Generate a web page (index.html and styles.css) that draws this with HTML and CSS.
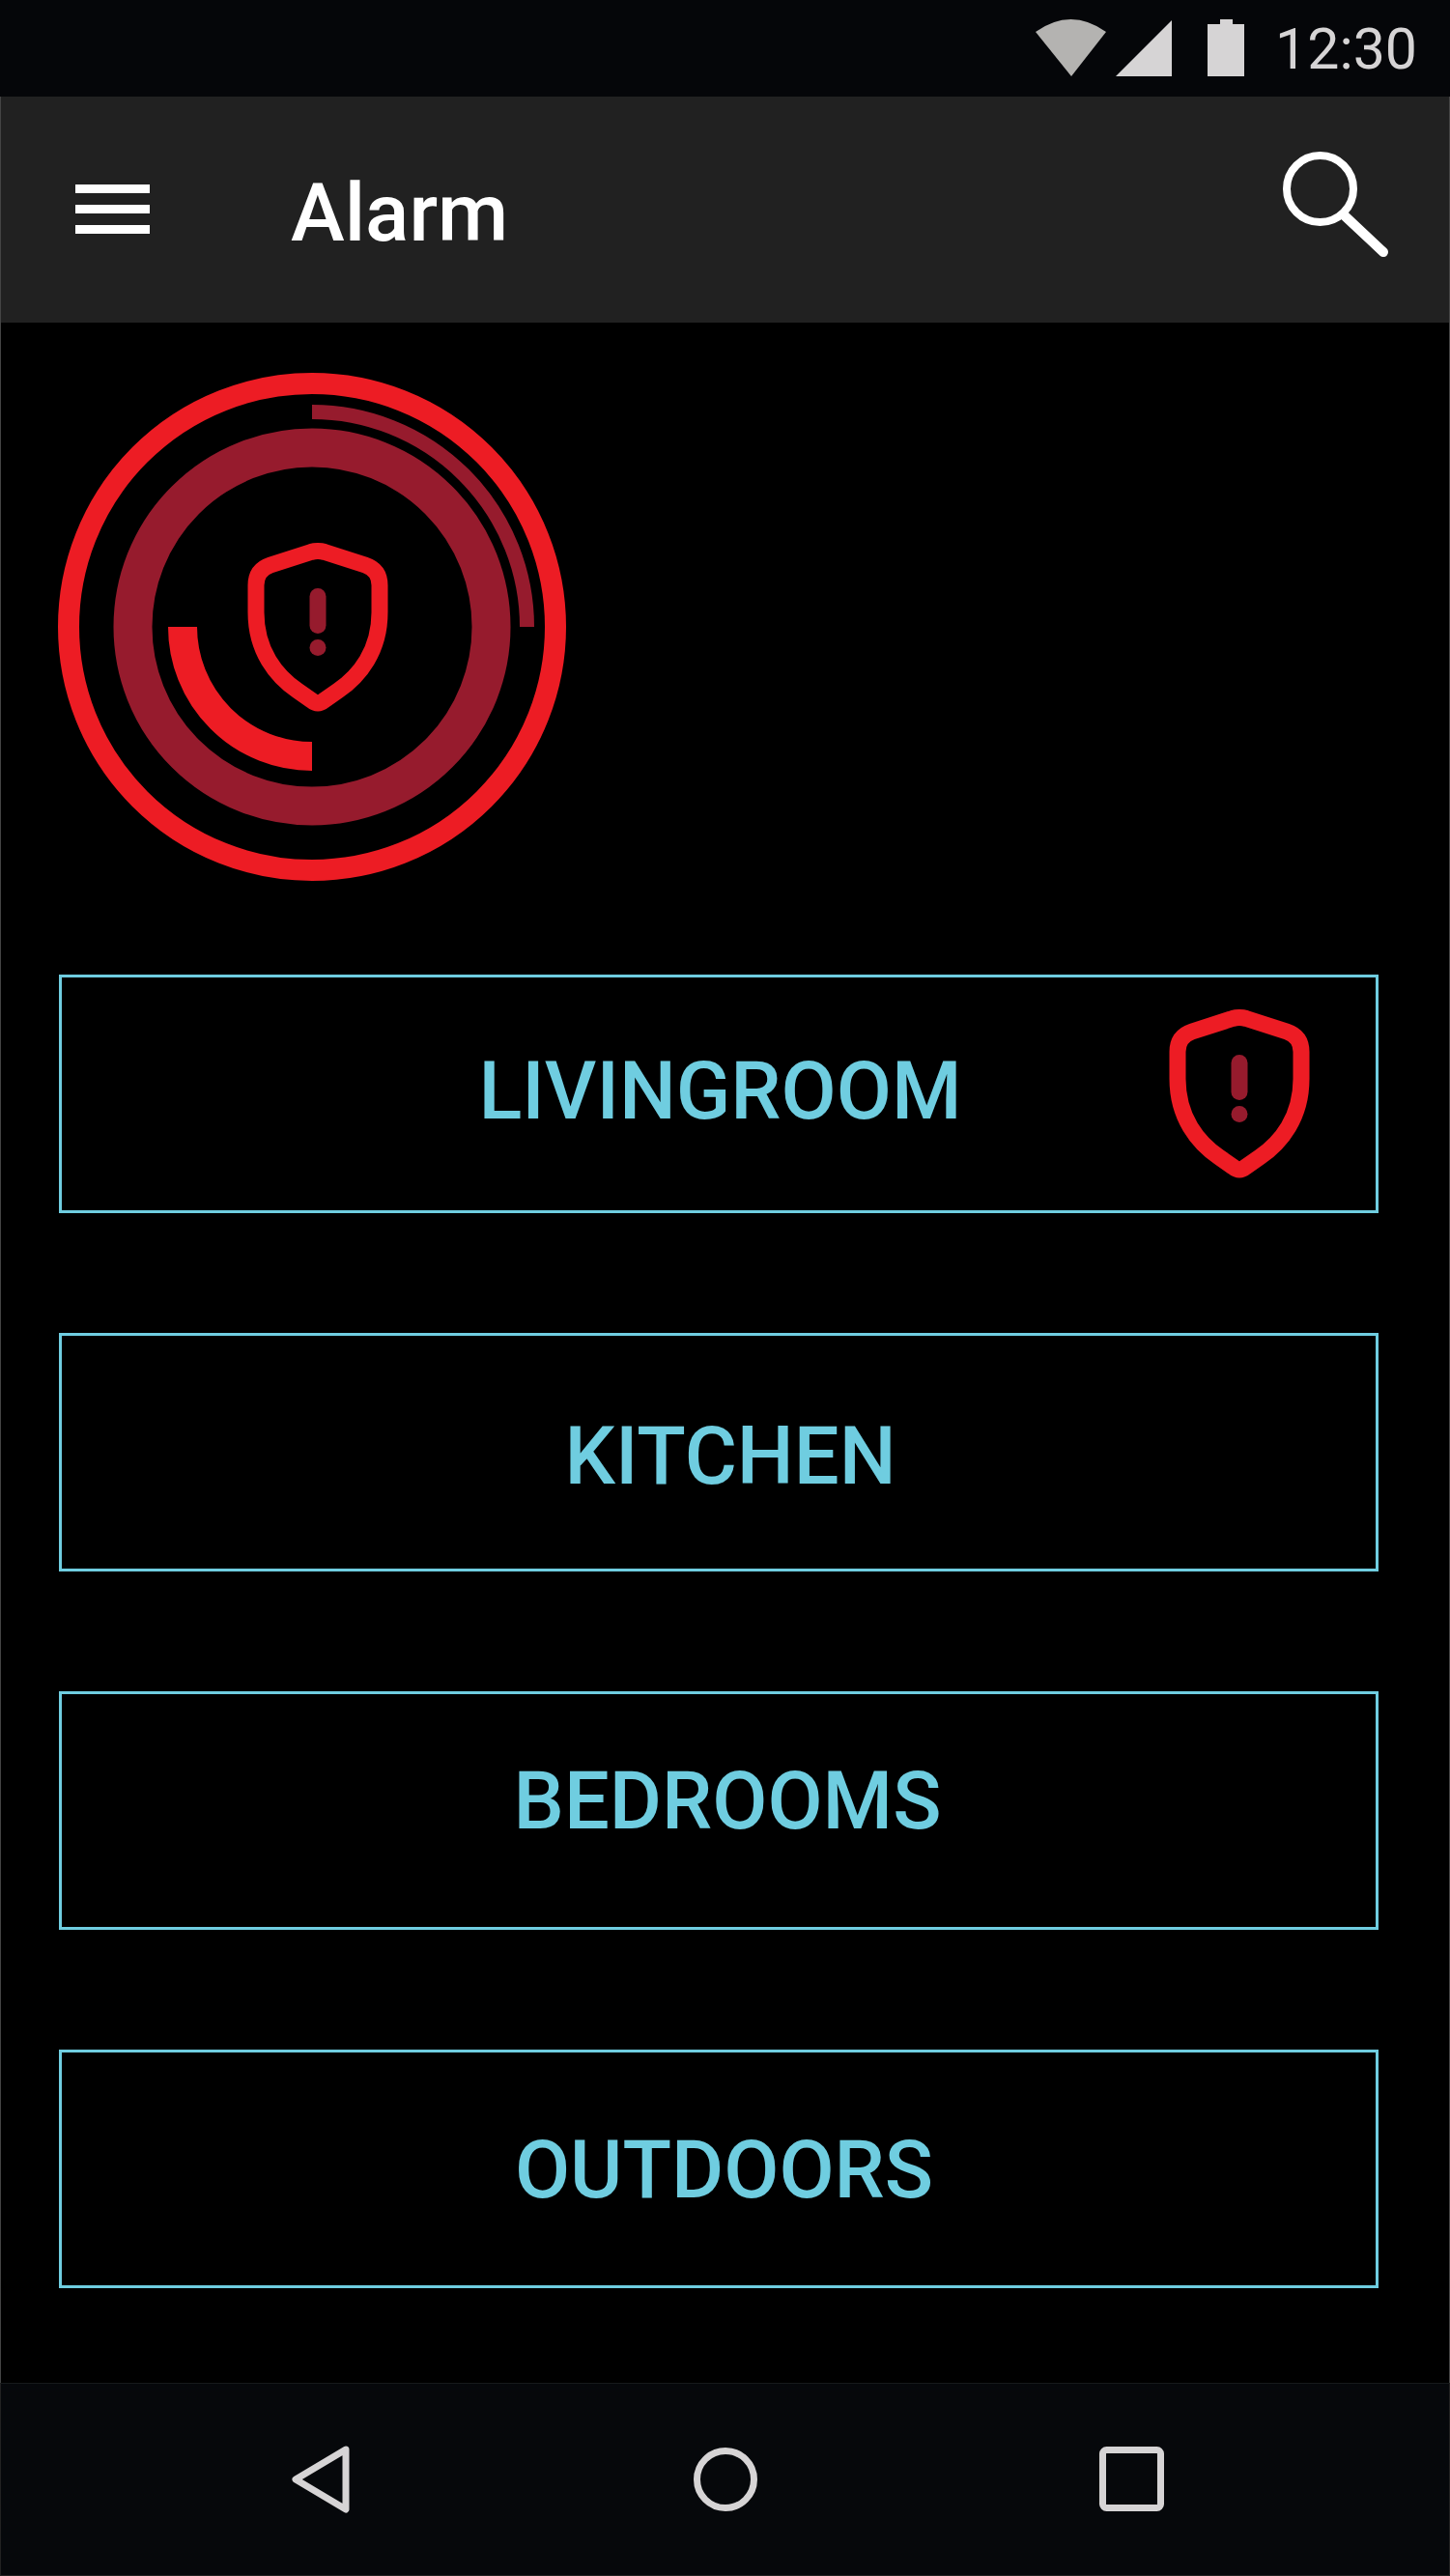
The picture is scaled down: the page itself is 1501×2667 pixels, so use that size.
FILE: index.html
```html
<!DOCTYPE html>
<html lang="en">
<head>
  <meta charset="UTF-8">
  <meta name="viewport" content="width=device-width, initial-scale=1.0">
  <title>Alarm</title>
  <link rel="stylesheet" href="styles.css">
</head>
<body>
<svg class="defs" width="0" height="0">
  <symbol id="shield" viewBox="0 0 146 175">
    <path class="shield-line" d="M66 9.5 Q73 7.5 80 9.5 L122 23 Q137 28 137 44 L137 72 C137 112 116 138 94 153 L79 163.5 Q73 168.5 67 163.5 L52 153 C30 138 9 112 9 72 L9 44 Q9 28 24 23 Z"/>
    <rect class="shield-mark" x="64.5" y="47" width="17" height="47" rx="8.5"/>
    <circle class="shield-mark" cx="73" cy="108.5" r="8.5"/>
  </symbol>
</svg>

<header class="status-bar">
  <svg class="wifi" width="73" height="59" viewBox="0 0 73 59"><path d="M0 13 Q36.5 -13 73 13 L37 59 Z"/></svg>
  <svg class="signal" width="58" height="59" viewBox="0 0 58 59"><path d="M0 59 L58 1 L58 59 Z"/></svg>
  <svg class="battery" width="38" height="59" viewBox="0 0 38 59"><path d="M13 0 H26 V5 H38 V59 H0 V5 H13 Z"/></svg>
  <span class="clock">12:30</span>
</header>

<div class="app-bar">
  <div class="menu-icon"><span></span><span></span><span></span></div>
  <h1>Alarm</h1>
  <svg class="search-icon" width="109" height="109" viewBox="0 0 109 109">
    <circle cx="38.5" cy="38.5" r="34.5"/>
    <path d="M63.5 66 L104 104"/>
  </svg>
</div>

<main class="content">
  <svg class="status-dial" width="526" height="526" viewBox="0 0 526 526">
    <circle class="dial-outer" cx="263" cy="263" r="252"/>
    <circle class="dial-mid" cx="263" cy="263" r="185.5"/>
    <path class="dial-thin" d="M263 40.5 A222.5 222.5 0 0 1 485.5 263"/>
    <path class="dial-thick" d="M129 263 A134 134 0 0 0 263 397"/>
    <use href="#shield" x="196" y="176" width="146" height="175"/>
  </svg>

  <div class="zones">
    <a class="zone zone-living">LIVINGROOM
      <svg class="zone-alert" width="146" height="175"><use href="#shield"/></svg>
    </a>
    <a class="zone zone-kitchen">KITCHEN</a>
    <a class="zone zone-bedrooms">BEDROOMS</a>
    <a class="zone zone-outdoors">OUTDOORS</a>
  </div>
</main>

<nav class="nav-bar">
  <svg class="nav-back" width="62" height="70" viewBox="0 0 62 70"><path d="M57 4 L5 35 L57 66 Z"/></svg>
  <svg class="nav-home" width="66" height="66" viewBox="0 0 66 66"><circle cx="33" cy="33" r="29.5"/></svg>
  <svg class="nav-recent" width="67" height="67" viewBox="0 0 67 67"><rect x="3.5" y="3.5" width="60" height="60" rx="4"/></svg>
</nav>
</body>
</html>
```

FILE: styles.css
```css
html, body {
  margin: 0;
  padding: 0;
  background: #000;
}

body {
  display: flex;
  flex-direction: column;
  height: 2667px;
  font-family: Roboto, "Liberation Sans", sans-serif;
}

.defs {
  position: absolute;
}

.shield-line {
  fill: none;
  stroke: #ed1c24;
  stroke-width: 17;
  stroke-linejoin: round;
}

.shield-mark {
  fill: #961b2d;
}

/* status bar */
.status-bar {
  display: flex;
  align-items: flex-start;
  flex: 0 0 100px;
  box-sizing: border-box;
  padding: 20px 34px 0 0;
  justify-content: flex-end;
  background: #050609;
}

.status-bar svg {
  fill: #d6d4d5;
}

.status-bar .wifi {
  fill: #b4b3b1;
  margin-right: 10px;
}

.signal {
  margin-right: 37px;
}

.battery {
  margin-right: 32px;
}

.clock {
  margin-top: 1px;
  font-size: 59px;
  line-height: 59px;
  color: #d6d4d5;
}

/* app bar */
.app-bar {
  display: flex;
  align-items: center;
  flex: 0 0 234px;
  box-sizing: border-box;
  padding: 0 63px 0 77px;
  background: #212121;
  border-left: 1px solid #444;
  border-right: 1px solid #444;
}

.menu-icon {
  display: flex;
  flex-direction: column;
  gap: 12px;
  width: 77px;
  margin-top: -1px;
}

.menu-icon span {
  height: 9px;
  background: #fff;
}

.app-bar h1 {
  margin: 8px 0 0 146px;
  font-size: 84px;
  line-height: 84px;
  font-weight: 500;
  color: #fff;
}

.search-icon {
  margin: 0 0 12px auto;
  fill: none;
  stroke: #fff;
}

.search-icon circle {
  stroke-width: 8;
}

.search-icon path {
  stroke-width: 10;
  stroke-linecap: round;
}

/* main content */
.content {
  flex: 1;
  box-sizing: border-box;
  padding: 52px 73px 0 60px;
  border-left: 1px solid #444;
  border-right: 1px solid #444;
}

.status-dial {
  display: block;
  fill: none;
  margin: 0 0 97px -1px;
}

.dial-outer {
  stroke: #ed1c24;
  stroke-width: 22;
}

.dial-mid {
  stroke: #961b2d;
  stroke-width: 40;
}

.dial-thin {
  stroke: #961b2d;
  stroke-width: 15;
}

.dial-thick {
  stroke: #ed1c24;
  stroke-width: 30;
}

.zones {
  display: flex;
  flex-direction: column;
  gap: 124px;
}

.zone {
  position: relative;
  display: flex;
  align-items: center;
  justify-content: center;
  box-sizing: border-box;
  height: 247px;
  border: 3px solid #6fcde0;
  font-size: 83px;
  line-height: 83px;
  font-weight: 500;
  color: #6fcde0;
}

.zone-living {
  padding: 0 0 7px 3px;
}

.zone-kitchen {
  padding: 7px 0 0 24px;
}

.zone-bedrooms {
  padding: 0 0 21px 18px;
}

.zone-outdoors {
  padding: 1px 0 0 11px;
}

.zone-alert {
  position: absolute;
  top: 33px;
  right: 68px;
}

/* nav bar */
.nav-bar {
  display: flex;
  align-items: flex-start;
  flex: 0 0 200px;
  box-sizing: border-box;
  padding: 64px 0 0 300px;
  background: #06080b;
  border: 1px solid #222;
  border-top-color: #17191b;
  fill: none;
  stroke: #d6d4d5;
  stroke-width: 7;
}

.nav-back {
  stroke-linejoin: round;
  margin-right: 355px;
}

.nav-home {
  margin: 2px 354px 0 0;
}

.nav-recent {
  margin-top: 1px;
}
```
